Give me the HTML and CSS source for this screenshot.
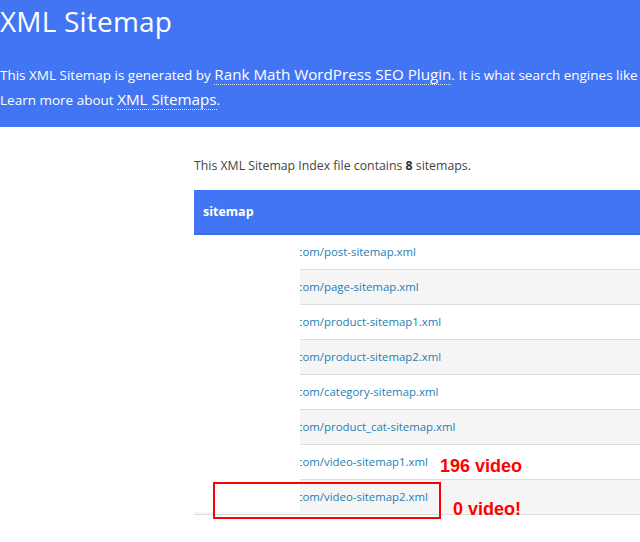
FILE: index.html
```html
<!DOCTYPE html>
<html lang="en">
<head>
    <meta charset="UTF-8">
    <title>XML Sitemap</title>
    <link rel="stylesheet" href="styles.css">
</head>
<body>

<div id="description">
    <h1>XML Sitemap</h1>
    <p>This XML Sitemap is generated by <a href="#">Rank Math WordPress SEO Plugin</a>. It is what search engines like Google use to crawl and re-crawl posts/pages/products/images/archives on your website.</p>
    <p>Learn more about <a href="#">XML Sitemaps</a>.</p>
</div>

<div id="content">
    <p class="expl">This XML Sitemap Index file contains <strong>8</strong> sitemaps.</p>
    <div class="table-wrap">
        <table id="sitemap">
            <thead>
                <tr><th>sitemap</th></tr>
            </thead>
            <tbody>
                <tr><td><a href="#">com/post-sitemap.xml</a></td></tr>
                <tr><td><a href="#">com/page-sitemap.xml</a></td></tr>
                <tr><td><a href="#">com/product-sitemap1.xml</a></td></tr>
                <tr><td><a href="#">com/product-sitemap2.xml</a></td></tr>
                <tr><td><a href="#">com/category-sitemap.xml</a></td></tr>
                <tr><td><a href="#">com/product_cat-sitemap.xml</a></td></tr>
                <tr><td><a href="#">com/video-sitemap1.xml</a></td></tr>
                <tr><td><a href="#">com/video-sitemap2.xml</a></td></tr>
            </tbody>
        </table>
        <!-- domain blanked out -->
        <div class="mask"></div>
        <!-- notes -->
        <div class="note note-1">196 video</div>
        <div class="note note-2">0 video!</div>
        <div class="highlight"></div>
    </div>
</div>

</body>
</html>
```

FILE: styles.css
```css
/* Global */
body {
    margin: 0;
    padding: 0;
    width: 640px;
    height: 542px;
    overflow: hidden;
    background: #fff;
    font-family: 'Open Sans', 'Noto Sans', sans-serif;
    color: #444;
}

/* Blue header */
#description {
    background-color: #4275f4;
    color: #fff;
    height: 127px;
    box-sizing: border-box;
    padding: 4px 0 0 0;
    white-space: nowrap;
    overflow: hidden;
}

#description h1 {
    font-size: 28px;
    font-weight: 400;
    line-height: 34px;
    margin: 0 0 25px 0;
    letter-spacing: 0.2px;
}

#description p {
    font-size: 13.5px;
    line-height: 25px;
    height: 25px;
    margin: 0;
}

#description a {
    color: #fff;
    font-size: 15.2px;
    line-height: 16px;
    text-decoration: none;
    border-bottom: 1px dotted rgba(255, 255, 255, 0.8);
}

/* Sitemap list */
#content {
    padding: 29px 0 0 194px;
}

.expl {
    font-size: 12.3px;
    margin: 0 0 14px 0;
    line-height: 20px;
    white-space: nowrap;
}

.expl strong {
    color: #333;
}

.table-wrap {
    position: relative;
    width: 446px;
}

#sitemap {
    border-collapse: collapse;
    width: 700px;
    font-size: 11.4px;
}

#sitemap th {
    background-color: #4275f4;
    border-bottom: 2px solid #3a6ce8;
    color: #fff;
    text-align: left;
    font-size: 12.5px;
    font-weight: 700;
    height: 44px;
    padding: 0 9px;
    box-sizing: border-box;
}

#sitemap td {
    height: 34px;
    padding: 0 0 0 103px;
    border-bottom: 1px solid #ddd;
    line-height: 16px;
}

#sitemap tbody tr:nth-child(even) {
    background-color: #f5f5f5;
}

#sitemap a {
    color: #1c80b5;
    text-decoration: none;
}

.mask {
    position: absolute;
    left: 0;
    top: 46px;
    width: 106px;
    height: 276px;
    background: #fff;
}

.note {
    position: absolute;
    color: #ff0000;
    font-family: 'Liberation Sans', Arial, sans-serif;
    font-weight: 700;
    font-size: 18px;
    line-height: 20px;
    white-space: nowrap;
}

.note-1 {
    left: 246px;
    top: 266px;
}

.note-2 {
    left: 259px;
    top: 309px;
}

.highlight {
    position: absolute;
    left: 19px;
    top: 292px;
    width: 224px;
    height: 33px;
    border: 2px solid #ff0000;
}
```
